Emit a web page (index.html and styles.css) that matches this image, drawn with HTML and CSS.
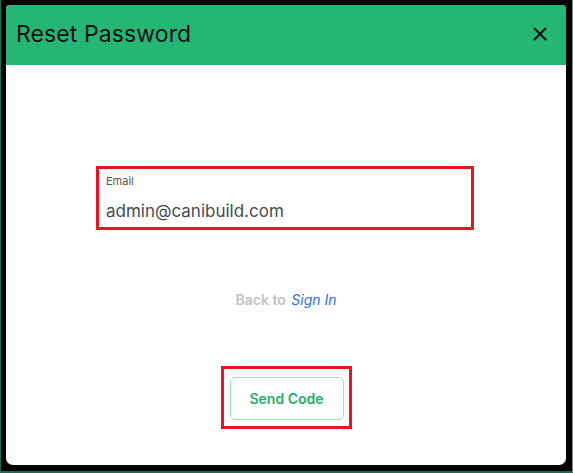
FILE: index.html
```html
<!DOCTYPE html>
<html lang="en">
<head>
	<meta charset="UTF-8">
	<title>Reset Password</title>
	<link rel="stylesheet" href="styles.css">
</head>
<body>
<div class="screen">
	<div class="modal">
		<div class="modal-head">
			<h2>Reset Password</h2>
			<a href="javascript:;" class="close">
				<svg width="16" height="16" viewBox="0 0 16 16"><path d="M2 2L14 14M14 2L2 14" stroke="#111" stroke-width="2.2" fill="none"/></svg>
			</a>
		</div>
		<div class="modal-body">
			<div class="field">
				<label>Email</label>
				<div class="value">admin@canibuild.com</div>
			</div>
			<p class="back">Back to <a href="javascript:;">Sign In</a></p>
			<div class="btn-wrap">
				<a href="javascript:;" class="btn">Send Code</a>
			</div>
		</div>
	</div>
</div>
</body>
</html>
```

FILE: styles.css
```css
*{
	margin: 0;
	padding: 0;
	box-sizing: border-box;
	text-decoration: none;
}
html, body {
	background: #000;
}
.screen {
	width: 573px;
	height: 473px;
	border-left: 1px solid #1c6b58;
	border-bottom: 2px solid #1c6b58;
	border-right: 1px solid #8a8a8a;
	padding: 5px 5px 5px 5px;
	font-family: Inter, "Noto Sans", sans-serif;
}
.modal {
	width: 560px;
	height: 460px;
	background: #fff;
	border-radius: 4px 4px 7px 7px;
	overflow: hidden;
	display: flex;
	flex-direction: column;
}
.modal-head {
	height: 60px;
	background: #24b675;
	display: flex;
	align-items: center;
	justify-content: space-between;
	padding: 0 18px 3px 10px;
}
.modal-head h2 {
	font-size: 23px;
	font-weight: 400;
	color: #111;
	letter-spacing: 0.1px;
}
.close {
	display: flex;
}
.modal-body {
	display: flex;
	flex-direction: column;
	align-items: center;
	padding-top: 101px;
}
.field {
	width: 378px;
	height: 64px;
	border: 3px solid #e8141f;
	padding: 5px 0 0 7px;
	margin-left: -2px;
}
.field label {
	display: block;
	font-size: 11px;
	color: #555;
	line-height: 14px;
}
.field .value {
	margin-top: 12px;
	font-size: 17px;
	color: #4a4a55;
	line-height: 22px;
}
.back {
	margin-top: 60px;
	font-size: 14px;
	font-weight: 600;
	color: #c2c2c2;
	line-height: 20px;
}
.back a {
	color: #2a6ff0;
	font-style: italic;
	font-weight: 400;
	margin-left: 2px;
}
.btn-wrap {
	margin-top: 56px;
	width: 131px;
	height: 63px;
	border: 3px solid #e8141f;
	padding: 8px 5px 0 6px;
}
.btn {
	display: flex;
	align-items: center;
	justify-content: center;
	width: 114px;
	height: 43px;
	border: 1px solid #9fdfc2;
	border-radius: 5px;
	color: #22b06f;
	font-size: 14px;
	font-weight: 600;
}
```
